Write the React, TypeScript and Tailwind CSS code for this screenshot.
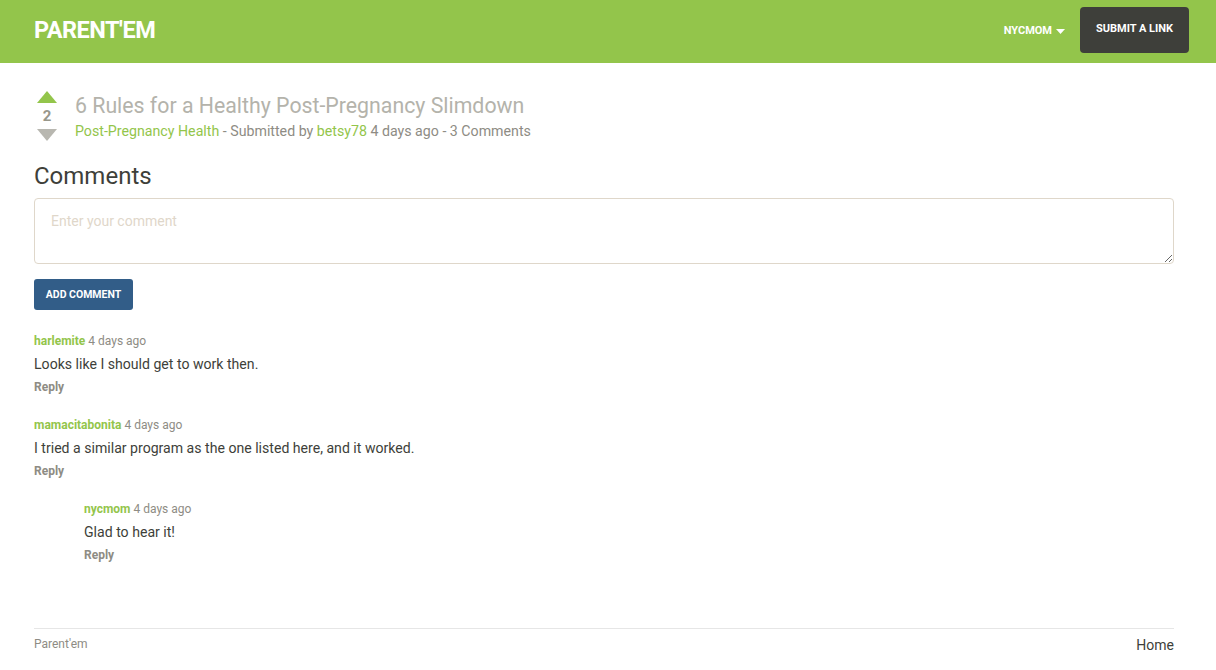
type Comment = { user: string; ago: string; body: string; replies?: Comment[] };

const comments: Comment[] = [
  { user: "harlemite", ago: "4 days ago", body: "Looks like I should get to work then." },
  {
    user: "mamacitabonita",
    ago: "4 days ago",
    body: "I tried a similar program as the one listed here, and it worked.",
    replies: [{ user: "nycmom", ago: "4 days ago", body: "Glad to hear it!" }],
  },
];

function CommentItem({ c }: { c: Comment }) {
  return (
    <div>
      <div className="h-[84px]">
        <p className="text-[12px] leading-[17px] pt-[3px]">
          <span className="font-bold text-[#93c54b]">{c.user}</span>{" "}
          <span className="text-[#8e8c84]">{c.ago}</span>
        </p>
        <p className="text-[14.1px] leading-[20px] mt-[4px] text-[#3e3f3a]">{c.body}</p>
        <p className="text-[12px] leading-[17px] mt-[5px] font-bold text-[#8e8c84]">Reply</p>
      </div>
      {c.replies && (
        <div className="pl-[50px]">
          {c.replies.map((r) => (
            <CommentItem key={r.user} c={r} />
          ))}
        </div>
      )}
    </div>
  );
}

export default function App() {
  return (
    <div className="min-h-screen bg-white text-[#3e3f3a] font-['Roboto','Liberation_Sans',sans-serif]">
      {/* Navbar */}
      <nav className="h-[63px] bg-[#93c54b]">
        <div className="h-full pl-[34px] pr-[27px] flex items-center justify-between">
          <span className="text-white font-bold text-[23.5px] tracking-[-0.5px] mt-[-2px]">PARENT'EM</span>
          <div className="flex items-center mt-[-4px]">
            <span className="flex items-center gap-[4px] text-white font-bold text-[11px] mr-[15px] mt-[4px]">
              NYCMOM
              <svg width="9" height="5" viewBox="0 0 9 5"><path d="M0 0h9L4.5 5z" fill="#fff" /></svg>
            </span>
            <button className="w-[109px] h-[46px] bg-[#3e3f3a] rounded-[4px] text-white font-bold text-[11px]">
              SUBMIT A LINK
            </button>
          </div>
        </div>
      </nav>

      <main className="w-[1140px] ml-[34px]">
        {/* Post */}
        <div className="flex items-start pt-[28px]">
          <div className="w-[26px] flex flex-col items-center pt-[0px] mr-[15px]">
            <svg width="20" height="12" viewBox="0 0 20 12"><path d="M10 0L20 12H0z" fill="#93c54b" /></svg>
            <span className="text-[15px] leading-[18px] font-bold text-[#98978b] mt-[4px]">2</span>
            <svg width="20" height="12" viewBox="0 0 20 12" className="mt-[4px]"><path d="M0 0h20L10 12z" fill="#b8b7b0" /></svg>
          </div>
          <div>
            <h1 className="text-[21.3px] leading-[28px] text-[#b4b3ab] mt-[1px]">6 Rules for a Healthy Post-Pregnancy Slimdown</h1>
            <p className="text-[14.2px] leading-[20px] text-[#8e8c84] mt-[1px]">
              <span className="text-[#93c54b]">Post-Pregnancy Health</span> - Submitted by{" "}
              <span className="text-[#93c54b]">betsy78</span> 4 days ago - 3 Comments
            </p>
          </div>
        </div>

        {/* Comments form */}
        <h2 className="text-[24px] leading-[30px] mt-[20px]">Comments</h2>
        <textarea
          placeholder="Enter your comment"
          className="mt-[7px] block w-full h-[66px] border border-[#dfd7ca] rounded-[4px] px-[16px] py-[12px] text-[14px] placeholder:text-[#dfd7ca] outline-none"
        />
        <button className="mt-[15px] h-[31px] w-[99px] bg-[#325d88] rounded-[3px] text-white font-bold text-[10.5px]">
          ADD COMMENT
        </button>

        {/* Comment list */}
        <div className="mt-[20px]">
          {comments.map((c) => (
            <CommentItem key={c.user} c={c} />
          ))}
        </div>

        {/* Footer */}
        <footer className="mt-[46px] border-t border-[#e6e6e6] flex justify-between">
          <span className="text-[12px] leading-[17px] text-[#8e8c84] pt-[7px]">Parent'em</span>
          <span className="text-[14px] leading-[20px] text-[#3e3f3a] pt-[6px]">Home</span>
        </footer>
      </main>
    </div>
  );
}
